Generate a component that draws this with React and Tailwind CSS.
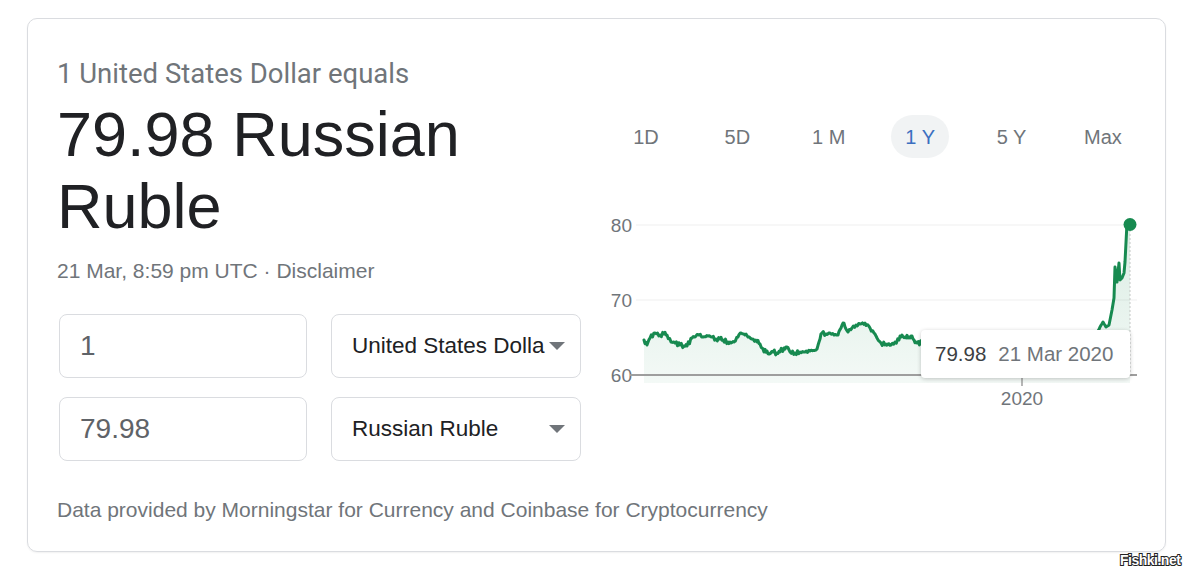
import React from "react";

const KEY = [
  [644,340],[647,345],[650,338],[655,333],[660,335],[664,334],[667,335],[671,342],[675,343],[680,345],[684,346],[687,346],[692,338],[696,336],[699,335],[703,337],[708,336],[712,337],[716,339],[720,339],[723,340],[728,342],[731,343],[734,342],[738,337],[741,333],[745,335],[748,337],[752,339],[757,342],[760,344],[764,352],[767,351],[769,354],[773,352],[777,353],[780,352],[784,348],[787,347],[790,352],[795,353],[800,352],[805,352],[810,351],[816,350],[819,342],[822,333],[826,334],[830,333],[834,335],[838,335],[841,328],[843,323],[846,329],[848,332],[852,328],[856,325],[860,324],[865,323],[868,325],[870,328],[874,333],[877,338],[881,343],[885,345],[888,344],[891,345],[895,342],[899,340],[902,335],[905,337],[908,338],[911,336],[914,340],[917,343],[922,343],
  [940,345],[960,342],[980,344],[1000,345],[1020,343],[1040,346],[1060,344],[1080,345],[1095,338],
  [1100,327],[1103,322],[1106,327],[1109,325],[1112,310],[1114,298],[1115,267],[1117,282],[1119,263],[1120,280],[1122,278],[1124,273],[1125,262],[1127,223],[1130,224]
];

function buildPoints() {
  const pts = [];
  for (let i = 0; i < KEY.length - 1; i++) {
    const [x0, y0] = KEY[i];
    const [x1, y1] = KEY[i + 1];
    const steps = Math.max(1, Math.round((x1 - x0) / 1.2));
    for (let s = 0; s < steps; s++) {
      const t = s / steps;
      const x = x0 + (x1 - x0) * t;
      let y = y0 + (y1 - y0) * t;
      if (x < 1098 && s > 0) {
        y += Math.sin(x * 2.7) * 1.4 + Math.sin(x * 7.3) * 1.0;
      }
      pts.push([x - 600, y - 200]);
    }
  }
  const last = KEY[KEY.length - 1];
  pts.push([last[0] - 600, last[1] - 200]);
  return pts;
}

const GREEN = "#178a50";

function Chart() {
  const pts = buildPoints();
  const line = pts.map((p, i) => (i ? "L" : "M") + p[0].toFixed(1) + " " + p[1].toFixed(1)).join(" ");
  const area = line + ` L ${pts[pts.length - 1][0]} 183 L ${pts[0][0]} 183 Z`;
  return (
    <svg width="550" height="215" viewBox="0 0 550 215" className="block">
      <defs>
        <linearGradient id="fillg" x1="0" y1="0" x2="0" y2="1">
          <stop offset="0%" stopColor={GREEN} stopOpacity="0.16" />
          <stop offset="100%" stopColor={GREEN} stopOpacity="0.05" />
        </linearGradient>
      </defs>
      <line x1="36" y1="25" x2="537" y2="25" stroke="#efefef" strokeWidth="1" />
      <line x1="36" y1="100" x2="537" y2="100" stroke="#efefef" strokeWidth="1" />
      <text x="32" y="32" textAnchor="end" fontSize="19" fill="#70757a" fontFamily="Liberation Sans, Arial, sans-serif">80</text>
      <text x="32" y="107" textAnchor="end" fontSize="19" fill="#70757a" fontFamily="Liberation Sans, Arial, sans-serif">70</text>
      <text x="32" y="182" textAnchor="end" fontSize="19" fill="#70757a" fontFamily="Liberation Sans, Arial, sans-serif">60</text>
      <path d={area} fill="url(#fillg)" />
      <line x1="30" y1="175" x2="537" y2="175" stroke="#9e9e9e" strokeWidth="2" />
      <line x1="422" y1="175" x2="422" y2="186" stroke="#9e9e9e" strokeWidth="1.5" />
      <text x="422" y="205" textAnchor="middle" fontSize="19" fill="#70757a" fontFamily="Liberation Sans, Arial, sans-serif">2020</text>
      <line x1="530" y1="26" x2="530" y2="175" stroke="#c4c7c5" strokeWidth="1" strokeDasharray="2 2" />
      <path d={line} fill="none" stroke={GREEN} strokeWidth="3" strokeLinejoin="round" strokeLinecap="round" />
      <circle cx="530" cy="24.5" r="6.5" fill={GREEN} />
    </svg>
  );
}

function Caret() {
  return (
    <svg width="16" height="8" viewBox="0 0 16 8" className="shrink-0">
      <path d="M0 0 L16 0 L8 8 Z" fill="#70757a" />
    </svg>
  );
}

const tabs = ["1D", "5D", "1 M", "1 Y", "5 Y", "Max"];

export default function App() {
  return (
    <div className="relative w-[1186px] h-[572px] bg-white pt-[18px] pl-[27px] font-['Liberation_Sans',Arial,sans-serif]">
      <div className="w-[1139px] h-[534px] border border-[#dadce0] rounded-[10px] shadow-[0_1px_2px_rgba(0,0,0,0.06)] pl-[29px] pr-[15px] pt-[39px] flex flex-col">
        <div className="flex">
          <div className="w-[525px] shrink-0">
            <div className="font-['Roboto',Arial,sans-serif] text-[27.5px] leading-[32px] text-[#70757a]">
              1 United States Dollar equals
            </div>
            <div className="mt-[8px] text-[63px] leading-[72px] text-[#202124]">
              79.98 Russian Ruble
            </div>
            <div className="mt-[17px] text-[21px] leading-[24px] text-[#70757a]">
              21 Mar, 8:59 pm UTC · Disclaimer
            </div>
            <div className="mt-[31px] ml-[2px] grid grid-cols-[248px_250px] gap-x-[24px] gap-y-[19px]">
              <div className="h-[64px] border border-[#dadce0] rounded-[8px] flex items-center pl-[20px] text-[28px] text-[#5f6368]">
                1
              </div>
              <div className="h-[64px] border border-[#dadce0] rounded-[8px] flex items-center pl-[20px] pr-[15px] text-[22.5px] text-[#202124]">
                <span className="flex-1 min-w-0 whitespace-nowrap">United States Dolla</span>
                <Caret />
              </div>
              <div className="h-[64px] border border-[#dadce0] rounded-[8px] flex items-center pl-[20px] text-[28px] text-[#5f6368]">
                79.98
              </div>
              <div className="h-[64px] border border-[#dadce0] rounded-[8px] flex items-center pl-[20px] pr-[15px] text-[22.5px] text-[#202124]">
                <span className="flex-1 min-w-0 whitespace-nowrap">Russian Ruble</span>
                <Caret />
              </div>
            </div>
          </div>
          <div className="ml-[18px] w-[550px] shrink-0">
            <div className="mt-[57px] pl-[17px] pr-[18px] flex justify-between">
              {tabs.map((t) => (
                <div
                  key={t}
                  className={
                    t === "1 Y"
                      ? "w-[58px] h-[43px] rounded-full bg-[#f1f3f4] flex items-center justify-center text-[20px] text-[#3b6fc0]"
                      : "w-[58px] h-[43px] rounded-full flex items-center justify-center text-[20px] text-[#70757a]"
                  }
                >
                  {t}
                </div>
              ))}
            </div>
            <div className="relative mt-[42px]">
              <Chart />
              <div className="absolute left-[321px] top-[130px] w-[209px] h-[48px] bg-white rounded-[4px] shadow-[0_1px_4px_rgba(0,0,0,0.22)] flex items-center pl-[14px] text-[20.5px]">
                <span className="text-[#3c4043]">79.98</span>
                <span className="ml-[12px] text-[#70757a]">21 Mar 2020</span>
              </div>
            </div>
          </div>
        </div>
        <div className="mt-[37px] text-[21px] leading-[24px] text-[#70757a]">
          Data provided by Morningstar for Currency and Coinbase for Cryptocurrency
        </div>
      </div>
      <div className="absolute left-[1120px] top-[550px] text-[14px] font-bold text-white [-webkit-text-stroke:2px_#222] [paint-order:stroke_fill] tracking-[-0.5px]">
        Fishki.net
      </div>
    </div>
  );
}
